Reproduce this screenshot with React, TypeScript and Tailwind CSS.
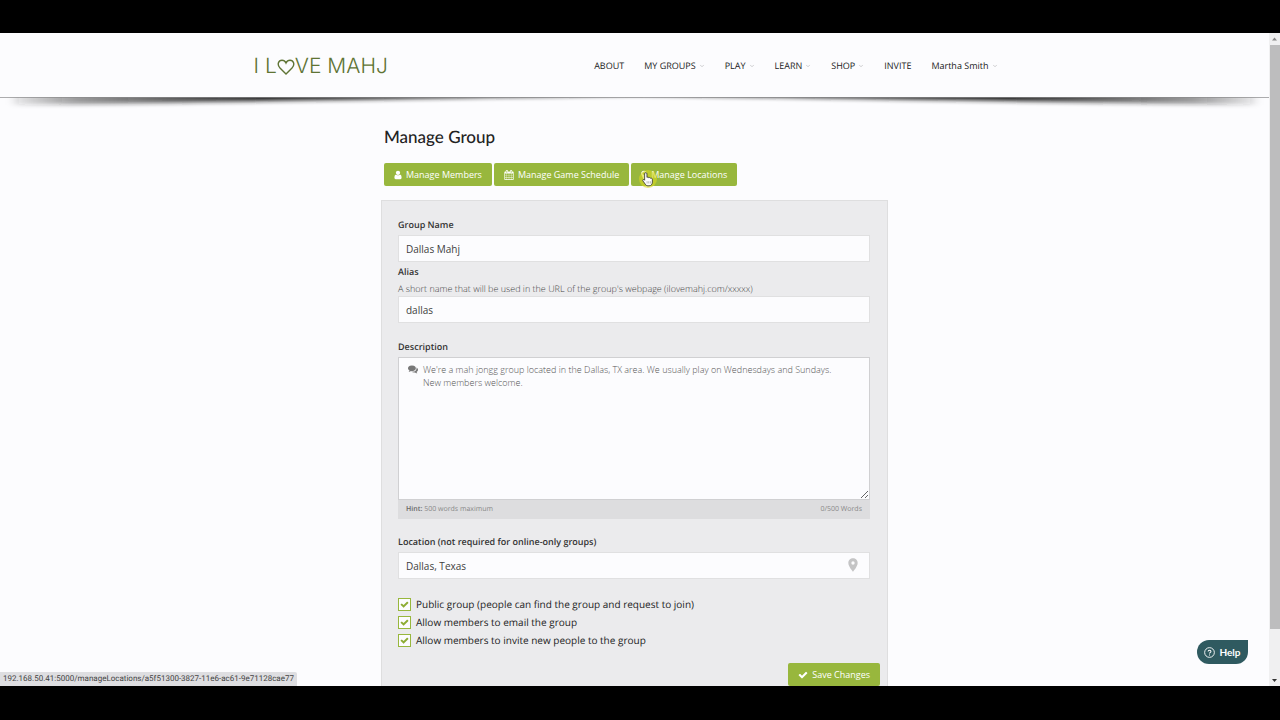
import React from 'react';
import { FiChevronDown } from 'react-icons/fi';
import { MdPlace } from 'react-icons/md';

interface NavItem {
  label: string;
  hasMenu?: boolean;
}

const NAV_ITEMS: NavItem[] = [
  { label: 'ABOUT' },
  { label: 'MY GROUPS', hasMenu: true },
  { label: 'PLAY', hasMenu: true },
  { label: 'LEARN', hasMenu: true },
  { label: 'SHOP', hasMenu: true },
  { label: 'INVITE' },
  { label: 'Martha Smith', hasMenu: true },
];

const OPTIONS = [
  { id: 'public', label: 'Public group (people can find the group and request to join)' },
  { id: 'email', label: 'Allow members to email the group' },
  { id: 'invite', label: 'Allow members to invite new people to the group' },
];

const ICONS = {
  user: {
    box: '0 0 1280 1792',
    d: 'M1280 1399q0 109-62.5 187t-150.5 78h-854q-88 0-150.5-78t-62.5-187q0-85 8.5-160.5t31.5-152 58.5-131 94-89 134.5-34.5q131 128 313 128t313-128q76 0 134.5 34.5t94 89 58.5 131 31.5 152 8.5 160.5zm-256-887q0 159-112.5 271.5t-271.5 112.5-271.5-112.5-112.5-271.5 112.5-271.5 271.5-112.5 271.5 112.5 112.5 271.5z',
  },
  calendar: {
    box: '0 0 1792 1792',
    d: 'M192 1664h288v-288h-288v288zm352 0h320v-288h-320v288zm-352-352h288v-320h-288v320zm352 0h320v-320h-320v320zm-352-384h288v-288h-288v288zm736 736h320v-288h-320v288zm-384-736h320v-288h-320v288zm768 736h288v-288h-288v288zm-384-352h320v-320h-320v320zm-352-864v-288q0-13-9.5-22.5t-22.5-9.5h-64q-13 0-22.5 9.5t-9.5 22.5v288q0 13 9.5 22.5t22.5 9.5h64q13 0 22.5-9.5t9.5-22.5zm736 864h288v-320h-288v320zm-384-384h320v-288h-320v288zm384 0h288v-288h-288v288zm32-480v-288q0-13-9.5-22.5t-22.5-9.5h-64q-13 0-22.5 9.5t-9.5 22.5v288q0 13 9.5 22.5t22.5 9.5h64q13 0 22.5-9.5t9.5-22.5zm384-64v1280q0 52-38 90t-90 38h-1408q-52 0-90-38t-38-90v-1280q0-52 38-90t90-38h128v-96q0-66 47-113t113-47h64q66 0 113 47t47 113v96h384v-96q0-66 47-113t113-47h64q66 0 113 47t47 113v96h128q52 0 90 38t38 90z',
  },
  marker: {
    box: '384 0 1024 1792',
    d: 'M1152 640q0-106-75-181t-181-75-181 75-75 181 75 181 181 75 181-75 75-181zm256 0q0 109-33 179l-364 774q-16 33-47.5 52t-67.5 19-67.5-19-46.5-52l-365-774q-33-70-33-179 0-212 150-362t362-150 362 150 150 362z',
  },
  check: {
    box: '0 0 1792 1792',
    d: 'M1671 566q0 40-28 68l-724 724-136 136q-28 28-68 28t-68-28l-136-136-362-362q-28-28-28-68t28-68l136-136q28-28 68-28t68 28l294 295 656-657q28-28 68-28t68 28l136 136q28 28 28 68z',
  },
  comments: {
    box: '0 0 1792 1792',
    d: 'M1408 768q0 139-94 257t-256.5 186.5-353.5 68.5q-86 0-176-16-124 88-278 128-36 9-86 16h-3q-11 0-20.5-8t-11.5-21q-1-3-1-6.5t.5-6.5 2-6l2.5-5 3.5-5.5 4-5 4.5-5 4-4.5q5-6 23-25t26-29.5 22.5-29 25-38.5 20.5-44q-124-72-195-177t-71-224q0-139 94-257t256.5-186.5 353.5-68.5 353.5 68.5 256.5 186.5 94 257zm384 256q0 120-71 224.5t-195 176.5q10 24 20.5 44t25 38.5 22.5 29 26 29.5 23 25q1 1 4 4.5t4.5 5 4 5 3.5 5.5l2.5 5 2 6 .5 6.5-1 6.5q-3 14-13 22t-22 7q-50-7-86-16-154-40-278-128-90 16-176 16-271 0-472-132 58 4 88 4 161 0 309-45t264-129q125-92 192-212t67-254q0-77-23-152 129 71 204 178t75 230z',
  },
};

const Icon: React.FC<{ name: keyof typeof ICONS; className?: string }> = ({ name, className }) => (
  <svg viewBox={ICONS[name].box} fill="currentColor" className={className} aria-hidden="true">
    <path d={ICONS[name].d} />
  </svg>
);

const BUTTON =
  'relative flex h-[23px] items-center gap-1 rounded-xs bg-[#98b73d] px-[10px] text-[9px] font-medium text-white';
const LABEL = 'block text-[9px] leading-5 font-semibold text-[#333]';
const INPUT =
  'block h-[27px] w-full border border-[#e0e0e1] bg-[#fcfcfe] px-[7px] text-[10px] text-[#404040] outline-none';

const Logo: React.FC = () => (
  <a href="#home" className="flex items-center pt-1 font-['Inter',sans-serif] text-[21px] font-light text-[#5f7434]">
    <span>I&nbsp;L</span>
    <svg viewBox="0 0 18 16" fill="none" stroke="currentColor" strokeWidth="1.4" className="h-4 w-[18px]" aria-label="O">
      <path d="M9 14.9 3 9C-.3 5.400 1.500 1.300 5 1.300c1.900 0 3.200 1 4 2.700.8-1.700 2.100-2.700 4-2.700 3.500 0 5.300 4.100 2 7.700z" />
    </svg>
    <span>VE&nbsp;MAHJ</span>
  </a>
);

// Curved drop shadow under the header, thin in the middle and soft at both ends
const HeaderShadow: React.FC = () => (
  <svg viewBox="0 0 1269 18" preserveAspectRatio="none" className="block h-[18px] w-full" aria-hidden="true">
    <defs>
      <linearGradient id="edge" x1="0" x2="1" y1="0" y2="0">
        <stop offset="0" stopColor="#222" stopOpacity="0.1" />
        <stop offset="0.05" stopColor="#222" stopOpacity="0.45" />
        <stop offset="0.2" stopColor="#222" />
        <stop offset="0.8" stopColor="#222" />
        <stop offset="0.95" stopColor="#222" stopOpacity="0.45" />
        <stop offset="1" stopColor="#222" stopOpacity="0.1" />
      </linearGradient>
      <filter id="soft" x="-2%" y="-100%" width="104%" height="300%">
        <feGaussianBlur stdDeviation="5 2" />
      </filter>
    </defs>
    <path d="M14-8H1255V8Q1000 4 634.500-2 270 4 14 8z" fill="url(#edge)" filter="url(#soft)" />
    <path d="M0 0H1269V1H0z" fill="#8a8a8c" opacity="0.7" />
  </svg>
);

const HandCursor: React.FC = () => (
  <span className="pointer-events-none absolute top-[7px] left-2 flex size-[18px] items-center justify-center rounded-full bg-[#d8d820]/60">
    <svg viewBox="0 0 16 20" className="h-4 w-3 shrink-0" aria-hidden="true">
      <path
        d="M5 1.500c1 0 1.600.7 1.600 1.700v4.600c.5-.5 2.300-.4 2.500.6.700-.6 2.200-.3 2.400.7.900-.4 2.300 0 2.300 1.300v3.700c0 2.600-1.600 5-4.400 5H8c-1.800 0-2.800-.9-3.700-2.300L1.200 12.500c-.8-1.300.7-2.500 1.900-1.400l.4.500V3.200c0-1 .6-1.700 1.500-1.700z"
        fill="#fff"
        stroke="#333"
        strokeWidth="1.1"
      />
      <path d="M6.800 13v3M9 13v3M11.200 13v3" stroke="#777" strokeWidth="0.7" />
    </svg>
  </span>
);

const Header: React.FC = () => (
  <header>
    <div className="mx-auto flex h-16 max-w-[762px] items-center justify-between pr-[18px]">
      <Logo />
      <nav className="flex items-center gap-5 pt-px text-[9px] text-[#222]">
        {NAV_ITEMS.map(item => (
          <a key={item.label} href="#nav" className="flex items-center gap-[3px]">
            {item.label}
            {item.hasMenu && <FiChevronDown className="size-[6px] text-[#a0a0a2]" />}
          </a>
        ))}
      </nav>
    </div>
    <HeaderShadow />
  </header>
);

const GroupForm: React.FC = () => (
  <form className="mt-[14px] border border-[#dededf] bg-[#ebebed] pt-[14px] pb-6" onSubmit={e => e.preventDefault()}>
    <div className="pr-[17px] pl-4">
      <label htmlFor="name" className={LABEL}>Group Name</label>
      <input id="name" type="text" defaultValue="Dallas Mahj" className={INPUT} />

      <label htmlFor="alias" className={LABEL}>Alias</label>
      <p className="text-[9px] leading-[14px] font-light text-[#444]">
        A short name that will be used in the URL of the group's webpage (ilovemahj.com/xxxxx)
      </p>
      <input id="alias" type="text" defaultValue="dallas" className={INPUT} />

      <label htmlFor="description" className={`mt-[14px] ${LABEL}`}>Description</label>
      <div className="relative">
        <textarea
          id="description"
          placeholder="We're a mah jongg group located in the Dallas, TX area. We usually play on Wednesdays and Sundays. New members welcome."
          className="block h-[143px] w-full border border-[#d0d0d2] bg-[#fcfcfe] pt-[5px] pr-8 pl-6 text-[9px] leading-[13px] font-light text-[#444] outline-none placeholder:text-[#555]"
        />
        <Icon name="comments" className="absolute top-[7px] left-[10px] size-[10px] text-[#777]" />
      </div>
      <div className="flex h-[19px] items-center justify-between bg-[#dddddf] px-2 pt-[2px] text-[7px] text-[#888]">
        <span><b className="font-semibold text-[#666]">Hint:</b> 500 words maximum</span>
        <span>0/500 Words</span>
      </div>

      <label htmlFor="location" className={`mt-[13px] ${LABEL}`}>Location (not required for online-only groups)</label>
      <div className="relative">
        <input id="location" type="text" defaultValue="Dallas, Texas" className={INPUT} />
        <MdPlace className="absolute top-[5px] right-[9px] size-4 text-[#c4c4c5]" />
      </div>

      <div className="mt-4">
        {OPTIONS.map(option => (
          <label key={option.id} htmlFor={option.id} className="flex h-[18px] items-center gap-[5px] text-[10px] text-[#222]">
            <span className="relative flex size-[13px]">
              <input
                id={option.id}
                type="checkbox"
                defaultChecked
                className="peer size-[13px] appearance-none border border-[#98b73d] bg-[#fcfcfe]"
              />
              <Icon name="check" className="pointer-events-none absolute inset-[2px] hidden size-[9px] text-[#8dac34] peer-checked:block" />
            </span>
            {option.label}
          </label>
        ))}
      </div>
    </div>
    <div className="mt-[14px] flex justify-end px-[7px]">
      <button type="submit" className={BUTTON}>
        <Icon name="check" className="size-[10px]" />
        Save Changes
      </button>
    </div>
  </form>
);

const ScrollBar: React.FC = () => (
  <div className="flex w-[11px] shrink-0 flex-col items-center bg-[#f0f0f1]" aria-hidden="true">
    <svg viewBox="0 0 11 12" className="h-3 w-full"><path d="M3 7.500 5.500 4.500 8 7.500z" fill="#888" /></svg>
    <div className="w-[10px] flex-[585] bg-[#bdbdbe]" />
    <div className="flex-[45]" />
    <svg viewBox="0 0 11 12" className="h-3 w-full"><path d="M3 5 5.500 8 8 5z" fill="#333" /></svg>
  </div>
);

const App: React.FC = () => {
  return (
    <div className="flex h-screen flex-col bg-black pt-[33px] pb-[34px] font-['Open_Sans',sans-serif] [text-rendering:geometricPrecision]">
      <div className="relative flex min-h-0 flex-1 bg-[#fcfcfe]">
        <div className="min-w-0 flex-1 overflow-hidden">
          <Header />
          <main className="mx-auto max-w-[507px]">
            <h1 className="mt-[10px] pl-[3px] font-['Lato',sans-serif] text-[17px] leading-6 font-medium text-[#222]">
              Manage Group
            </h1>
            <div className="mt-[14px] flex gap-[2px] pl-[3px]">
              <button type="button" className={BUTTON}>
                <Icon name="user" className="h-[10px] w-2" />
                Manage Members
              </button>
              <button type="button" className={BUTTON}>
                <Icon name="calendar" className="size-[10px]" />
                Manage Game Schedule
              </button>
              <button type="button" className={BUTTON}>
                <Icon name="marker" className="h-[10px] w-[6px]" />
                Manage Locations
                <HandCursor />
              </button>
            </div>
            <GroupForm />
          </main>
        </div>
        <ScrollBar />

        {/* Help launcher */}
        <button
          type="button"
          className="absolute right-8 bottom-[22px] flex h-6 w-[51px] items-center justify-center gap-1 rounded-full rounded-tr-xs bg-[#2f5a60] font-['Lato',sans-serif] text-[10px] font-bold text-white"
        >
          <svg viewBox="0 0 12 12" fill="none" stroke="currentColor" className="size-[11px]" aria-hidden="true">
            <circle cx="6" cy="6" r="5.300" />
            <path d="M4.500 4.800C4.500 3 7.600 3 7.600 4.800 7.600 5.800 6 5.800 6 7.100M6 8.200v1" strokeWidth="1.100" />
          </svg>
          Help
        </button>

        {/* Link target shown by the browser */}
        <div className="absolute bottom-0 left-0 flex h-[14px] items-center rounded-tr-xs bg-[#dedee1] px-[3px] font-['Roboto',sans-serif] text-[8px] text-[#444]">
          192.168.50.41:5000/manageLocations/a5f51300-3827-11e6-ac61-9e71128cae77
        </div>
      </div>
    </div>
  );
};

export default App;
